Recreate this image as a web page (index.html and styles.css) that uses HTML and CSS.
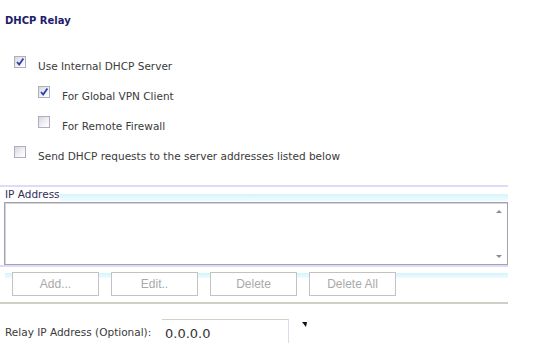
FILE: index.html
```html
<!DOCTYPE html>
<html lang="en">
<head>
  <meta charset="UTF-8" />
  <title>DHCP Relay</title>
  <link rel="stylesheet" href="styles.css">
</head>
<body>
  <div class="panel">
    <h2 class="title">DHCP Relay</h2>

    <div class="options">
      <div class="row">
        <span class="cb on"><svg viewBox="0 0 10 10"><path d="M2 5 L4.2 7.6 L8.4 1.6" /></svg></span>
        <span class="label">Use Internal DHCP Server</span>
      </div>
      <div class="row sub">
        <span class="cb on"><svg viewBox="0 0 10 10"><path d="M2 5 L4.2 7.6 L8.4 1.6" /></svg></span>
        <span class="label">For Global VPN Client</span>
      </div>
      <div class="row sub">
        <span class="cb"></span>
        <span class="label">For Remote Firewall</span>
      </div>
      <div class="row">
        <span class="cb"></span>
        <span class="label">Send DHCP requests to the server addresses listed below</span>
      </div>
    </div>

    <div class="list-section">
      <div class="list-head">
        <span class="list-title">IP Address</span>
        <span class="band"></span>
      </div>
      <div class="listbox">
        <div class="scroll">
          <span class="arrow up"></span>
          <span class="arrow down"></span>
        </div>
      </div>
      <div class="toolbar">
        <button class="btn" disabled>Add...</button>
        <button class="btn" disabled>Edit..</button>
        <button class="btn" disabled>Delete</button>
        <button class="btn" disabled>Delete All</button>
      </div>
    </div>

    <div class="relay">
      <span class="relay-label">Relay IP Address (Optional):</span>
      <input class="relay-input" type="text" value="0.0.0.0">
      <svg class="corner" viewBox="0 0 5 5" width="5" height="5"><polygon points="0,0 5,0 4,5" /></svg>
    </div>
  </div>
</body>
</html>
```

FILE: styles.css
```css
* {
  margin: 0;
  padding: 0;
  box-sizing: border-box;
}
body {
  font-family: 'DejaVu Sans', Verdana, sans-serif;
  font-size: 10.5px;
  line-height: 14px;
  color: #3a3a3a;
  background: #fff;
  width: 536px;
  height: 361px;
  overflow: hidden;
}
.title {
  margin: 14px 0 0 5px;
  font-size: 10px;
  font-weight: bold;
  line-height: 14px;
  color: #1c1c6a;
}
.options {
  margin-top: 28px;
}
.row {
  display: flex;
  align-items: flex-start;
  height: 30px;
  padding-left: 14px;
}
.row.sub {
  padding-left: 38px;
}
.cb {
  width: 12px;
  height: 12px;
  border: 1px solid #aeaec0;
  background: linear-gradient(135deg, #d6d6de, #f4f4f6 60%, #ffffff);
  display: flex;
  align-items: center;
  justify-content: center;
}
.cb svg {
  width: 10px;
  height: 10px;
  fill: none;
  stroke: #2c3fae;
  stroke-width: 1.8;
}
.label {
  margin-left: 12px;
  padding-top: 3px;
}

/* lista de IPs */
.list-section {
  margin-top: 9px;
  width: 508px;
  border-top: 2px solid #dcdcf6;
}
.list-head {
  display: flex;
  height: 15px;
}
.list-title {
  padding-left: 5px;
  color: #2e2e58;
}
.band {
  flex: 1;
  align-self: flex-end;
  height: 7px;
  margin-bottom: 1px;
  background: linear-gradient(#d6f4fb, #effcff);
}
.listbox {
  margin-left: 4px;
  height: 63px;
  border: 1px solid #a2a2b0;
  box-shadow: inset 1px 1px 0 #d2d2da;
  display: flex;
  justify-content: flex-end;
}
.scroll {
  width: 16px;
  display: flex;
  flex-direction: column;
  justify-content: space-between;
  align-items: center;
  padding: 7px 0 6px;
}
.arrow {
  width: 0;
  height: 0;
  border-left: 3px solid transparent;
  border-right: 3px solid transparent;
}
.arrow.up {
  border-bottom: 3px solid #8c8c8c;
}
.arrow.down {
  border-top: 3px solid #8c8c8c;
}
.toolbar {
  display: flex;
  gap: 12px;
  padding: 5px 0 0 12px;
  height: 39px;
  border-top: 2px solid #dcdcf6;
  border-bottom: 2px solid #cfcfc7;
  background: linear-gradient(#d4f4fb, #eefcff) no-repeat;
  background-position: 5px 6px;
  background-size: 503px 5px;
}
.btn {
  width: 87px;
  height: 24px;
  border: 1px solid #c2c2c2;
  background: #fff;
  color: #a9a9a9;
  font-family: 'Liberation Sans', Arial, sans-serif;
  font-size: 12px;
}

/* relay */
.relay {
  display: flex;
  align-items: flex-start;
  padding-top: 15px;
}
.relay-label {
  width: 157px;
  margin: 6px 0 0 5px;
}
.relay-input {
  width: 127px;
  height: 24px;
  border: none;
  border-top: 1px solid #d2d2c6;
  border-right: 1px solid #dadaf0;
  padding: 4px 0 0 3px;
  font-family: 'DejaVu Sans', Verdana, sans-serif;
  font-size: 13px;
  line-height: 16px;
  color: #333;
  outline: none;
  background: #fff;
}
.corner {
  margin: 3px 0 0 13px;
  fill: #111;
}
```
